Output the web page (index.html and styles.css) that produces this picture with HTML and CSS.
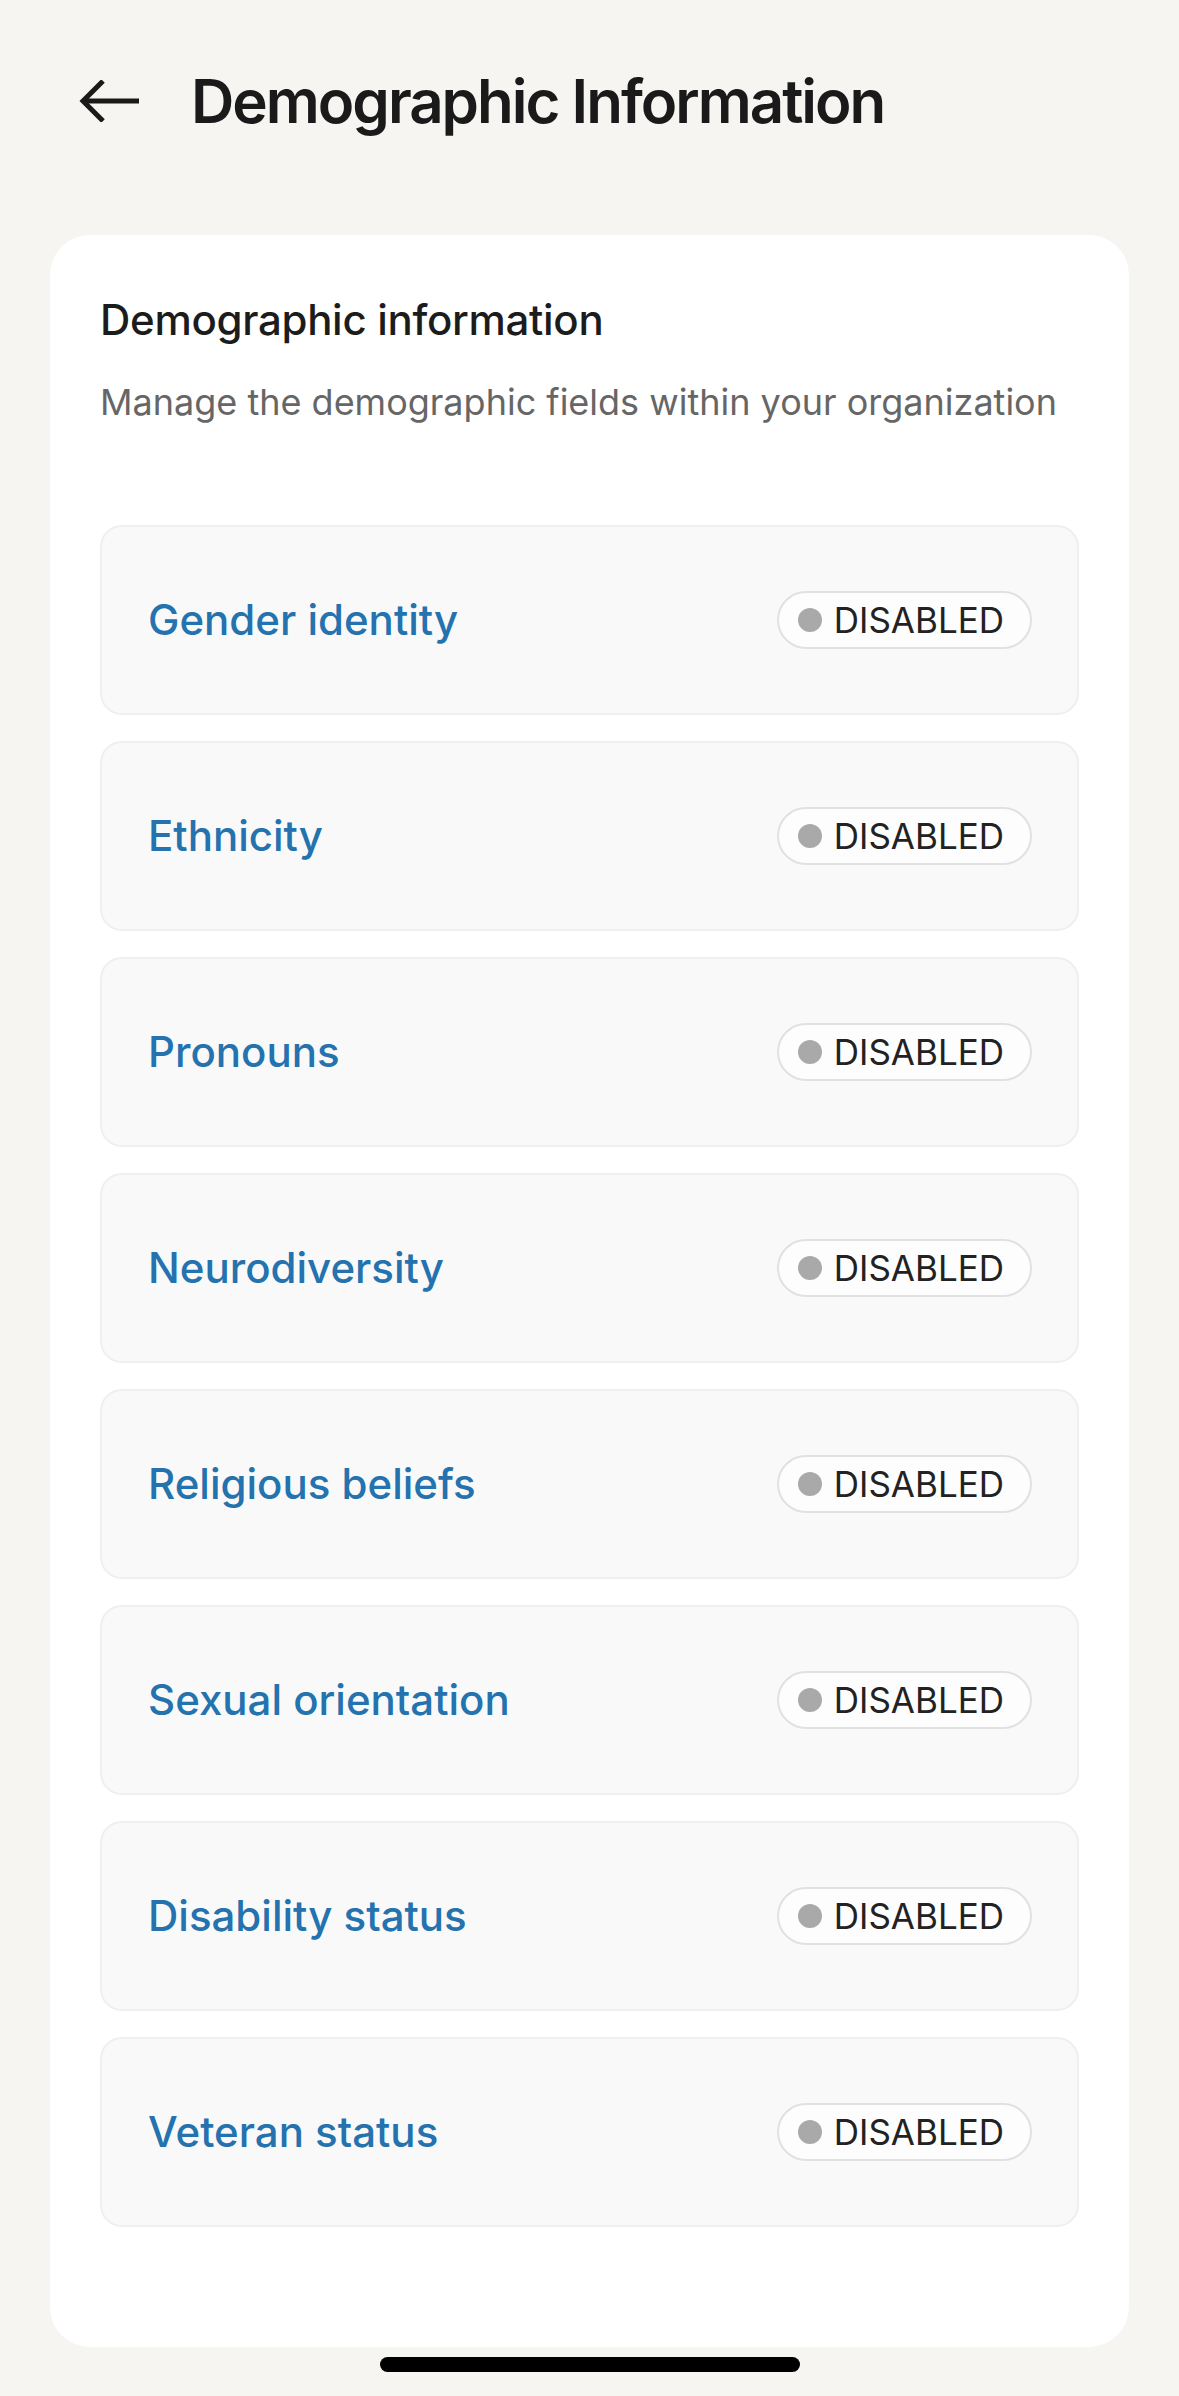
FILE: index.html
```html
<!DOCTYPE html>
<html lang="en">
<head>
    <meta charset="UTF-8">
    <meta name="viewport" content="width=device-width, initial-scale=1.0">
    <title>Demographic Information</title>
    <link rel="stylesheet" href="styles.css">
</head>
<body>
    <div class="page">
        <div class="header">
            <svg class="back" width="60" height="42" viewBox="0 0 60 42" fill="none" stroke="#1a1a1a" stroke-width="5">
                <path d="M24 1 L4 21 L24 41"/>
                <path d="M4 21 H60"/>
            </svg>
            <h1>Demographic Information</h1>
        </div>

        <div class="card">
            <h2>Demographic information</h2>
            <p class="subtitle">Manage the demographic fields within your organization</p>

            <div class="list">
                <div class="row"><span class="label">Gender identity</span><span class="badge"><i class="dot"></i>DISABLED</span></div>
                <div class="row"><span class="label">Ethnicity</span><span class="badge"><i class="dot"></i>DISABLED</span></div>
                <div class="row"><span class="label">Pronouns</span><span class="badge"><i class="dot"></i>DISABLED</span></div>
                <div class="row"><span class="label">Neurodiversity</span><span class="badge"><i class="dot"></i>DISABLED</span></div>
                <div class="row"><span class="label">Religious beliefs</span><span class="badge"><i class="dot"></i>DISABLED</span></div>
                <div class="row"><span class="label">Sexual orientation</span><span class="badge"><i class="dot"></i>DISABLED</span></div>
                <div class="row"><span class="label">Disability status</span><span class="badge"><i class="dot"></i>DISABLED</span></div>
                <div class="row"><span class="label">Veteran status</span><span class="badge"><i class="dot"></i>DISABLED</span></div>
            </div>
        </div>

        <div class="home-indicator"></div>
    </div>
</body>
</html>
```

FILE: styles.css
```css
body {
    margin: 0;
    background-color: #f6f5f2;
    font-family: Inter, "Noto Sans", sans-serif;
    color: #1a1a1a;
}
.page {
    padding: 65px 50px 0;
}
.header {
    display: flex;
    align-items: center;
    gap: 52px;
    padding-left: 29px;
    height: 72px;
    margin-bottom: 98px;
}
.back {
    flex-shrink: 0;
}
h1 {
    margin: 0;
    font-size: 60px;
    line-height: 72px;
    font-weight: 600;
    letter-spacing: -2px;
    color: #1a1a1a;
}
.card {
    background-color: #fff;
    border-radius: 40px;
    padding: 60px 50px 120px;
}
h2 {
    margin: 0;
    font-size: 42px;
    line-height: 50px;
    font-weight: 500;
    letter-spacing: -0.3px;
    color: #1c1c1c;
}
.subtitle {
    margin: 35px 0 0;
    font-size: 36px;
    line-height: 44px;
    color: #666;
}
.list {
    margin-top: 101px;
    display: flex;
    flex-direction: column;
    gap: 26px;
}
.row {
    display: flex;
    align-items: center;
    justify-content: space-between;
    padding: 64px 45px 64px 46px;
    background-color: #f9f9f9;
    border: 2px solid #efefef;
    border-radius: 22px;
}
.label {
    font-size: 42px;
    line-height: 50px;
    font-weight: 500;
    color: #2472ae;
}
.badge {
    display: flex;
    align-items: center;
    gap: 12px;
    height: 54px;
    padding: 0 26px 0 19px;
    border: 2px solid #e1e1e1;
    border-radius: 30px;
    background-color: #fdfdfd;
    font-size: 35px;
    color: #222;
}
.dot {
    width: 24px;
    height: 24px;
    border-radius: 50%;
    background-color: #a9a9a9;
}
.home-indicator {
    width: 420px;
    height: 15px;
    margin: 10px auto 0;
    border-radius: 8px;
    background-color: #000;
}
```
